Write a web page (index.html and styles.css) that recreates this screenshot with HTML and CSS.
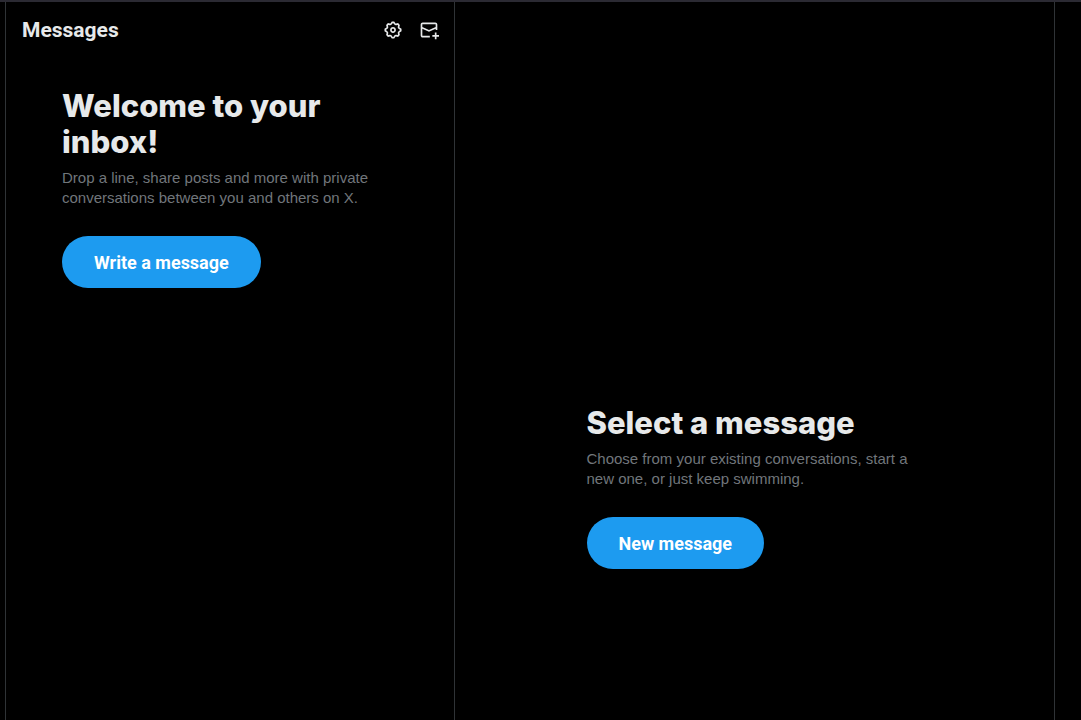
FILE: index.html
```html
<!DOCTYPE html>
<html lang="en">
<head>
    <meta charset="UTF-8">
    <meta name="viewport" content="width=device-width, initial-scale=1.0">
    <title>Messages / X</title>
    <link rel="stylesheet" href="styles.css">
</head>
<body>
    <main class="layout">

        <!-- Inbox column -->
        <section class="inbox">
            <header class="inbox-header">
                <h1 class="title">Messages</h1>
                <div class="actions">
                    <button class="icon-button" type="button" aria-label="Settings">
                        <svg class="icon" viewBox="0 0 24 24" aria-hidden="true">
                            <path d="M10.54 1.75h2.92l1.57 2.36c.11.17.32.25.53.21l2.53-.59 2.17 2.17-.58 2.54c-.05.2.04.41.21.53l2.36 1.57v2.92l-2.36 1.57c-.17.12-.26.33-.21.53l.58 2.54-2.17 2.17-2.53-.59c-.21-.04-.42.04-.53.21l-1.57 2.36h-2.92l-1.58-2.36c-.11-.17-.32-.25-.52-.21l-2.54.59-2.17-2.17.58-2.54c.05-.2-.03-.41-.21-.53l-2.35-1.57v-2.92L4.1 8.97c.18-.12.26-.33.21-.53L3.73 5.9 5.9 3.73l2.54.59c.2.04.41-.04.52-.21l1.58-2.36zm1.07 2l-.98 1.47C10.05 6.08 9 6.5 7.99 6.27l-1.46-.34-.6.6.33 1.46c.24 1.01-.18 2.07-1.05 2.64l-1.46.98v.78l1.46.98c.87.57 1.29 1.63 1.05 2.64l-.33 1.46.6.6 1.46-.34c1.01-.23 2.06.19 2.64 1.05l.98 1.47h.78l.97-1.47c.58-.86 1.63-1.28 2.65-1.05l1.45.34.61-.6-.34-1.46c-.23-1.01.18-2.07 1.05-2.64l1.47-.98v-.78l-1.47-.98c-.87-.57-1.28-1.63-1.05-2.64l.34-1.46-.61-.6-1.45.34c-1.02.23-2.07-.19-2.65-1.05l-.97-1.47h-.78zM12 10.5c-.83 0-1.5.67-1.5 1.5s.67 1.5 1.5 1.5c.82 0 1.5-.67 1.5-1.5s-.68-1.5-1.5-1.5zM8.5 12c0-1.93 1.56-3.5 3.5-3.5 1.93 0 3.5 1.57 3.5 3.5s-1.57 3.5-3.5 3.5c-1.94 0-3.5-1.57-3.5-3.5z"/>
                        </svg>
                    </button>
                    <button class="icon-button" type="button" aria-label="Compose a message">
                        <svg class="icon" viewBox="0 0 24 24" aria-hidden="true">
                            <path d="M1.998 5.5c0-1.381 1.119-2.5 2.5-2.5h15c1.381 0 2.5 1.119 2.5 2.5V12h-2v-1.537l-8 3.635-8-3.635V18.5c0 .276.224.5.5.5H13v2H4.498c-1.381 0-2.5-1.119-2.5-2.5v-13zm2 2.766l8 3.635 8-3.635V5.5c0-.276-.224-.5-.5-.5h-15c-.276 0-.5.224-.5.5v2.766zM19 18v-3h2v3h3v2h-3v3h-2v-3h-3v-2h3z"/>
                        </svg>
                    </button>
                </div>
            </header>

            <div class="welcome">
                <h2 class="heading">Welcome to your inbox!</h2>
                <p class="text">Drop a line, share posts and more with private conversations between you and others on X.</p>
                <button class="button" type="button">Write a message</button>
            </div>
        </section>

        <!-- Conversation column -->
        <section class="conversation">
            <div class="empty">
                <h2 class="heading">Select a message</h2>
                <p class="text">Choose from your existing conversations, start a new one, or just keep swimming.</p>
                <button class="button" type="button">New message</button>
            </div>
        </section>

    </main>
</body>
</html>
```
FILE: styles.css
```css
* {
    box-sizing: border-box;
}

body {
    margin: 0;
    background-color: #000;
    color: #e7e9ea;
    font-family: Roboto, sans-serif;
}

h1, h2, p {
    margin: 0;
}

.layout {
    display: grid;
    grid-template-columns: 3fr 4fr;
    min-height: 100vh;
    padding: 0 26px 0 5px;
    border-top: 2px solid #2b2a33;
}

.inbox {
    border-left: 1px solid #2f3336;
    border-right: 1px solid #2f3336;
}

.inbox-header {
    display: flex;
    align-items: center;
    justify-content: space-between;
    height: 56px;
    padding: 0 15px 0 16px;
}

.title {
    font-size: 21px;
    line-height: 24px;
}

.actions {
    display: flex;
    gap: 16px;
}

.icon-button {
    display: flex;
    padding: 0;
    border: 0;
    background: none;
    color: inherit;
    cursor: pointer;
}

.icon {
    width: 20px;
    height: 20px;
    fill: currentColor;
}

.welcome {
    max-width: 400px;
    margin: 0 auto;
    padding: 30px 32px;
}

.conversation {
    display: flex;
    justify-content: center;
    align-items: flex-start;
    padding-top: 56vh;
    border-right: 1px solid #2f3336;
}

.empty {
    width: 336px;
}

.heading {
    margin-bottom: 8px;
    font-family: Inter, sans-serif;
    font-size: 31px;
    font-weight: 800;
    line-height: 36px;
}

.text {
    margin-bottom: 28px;
    color: #71767b;
    font-family: "Liberation Sans", Arial, sans-serif;
    font-size: 15px;
    line-height: 20px;
}

.button {
    min-height: 52px;
    padding: 0 32px;
    border: 0;
    border-radius: 26px;
    background-color: #1d9bf0;
    color: #fff;
    font-family: inherit;
    font-size: 18px;
    font-weight: 700;
    cursor: pointer;
}
```
